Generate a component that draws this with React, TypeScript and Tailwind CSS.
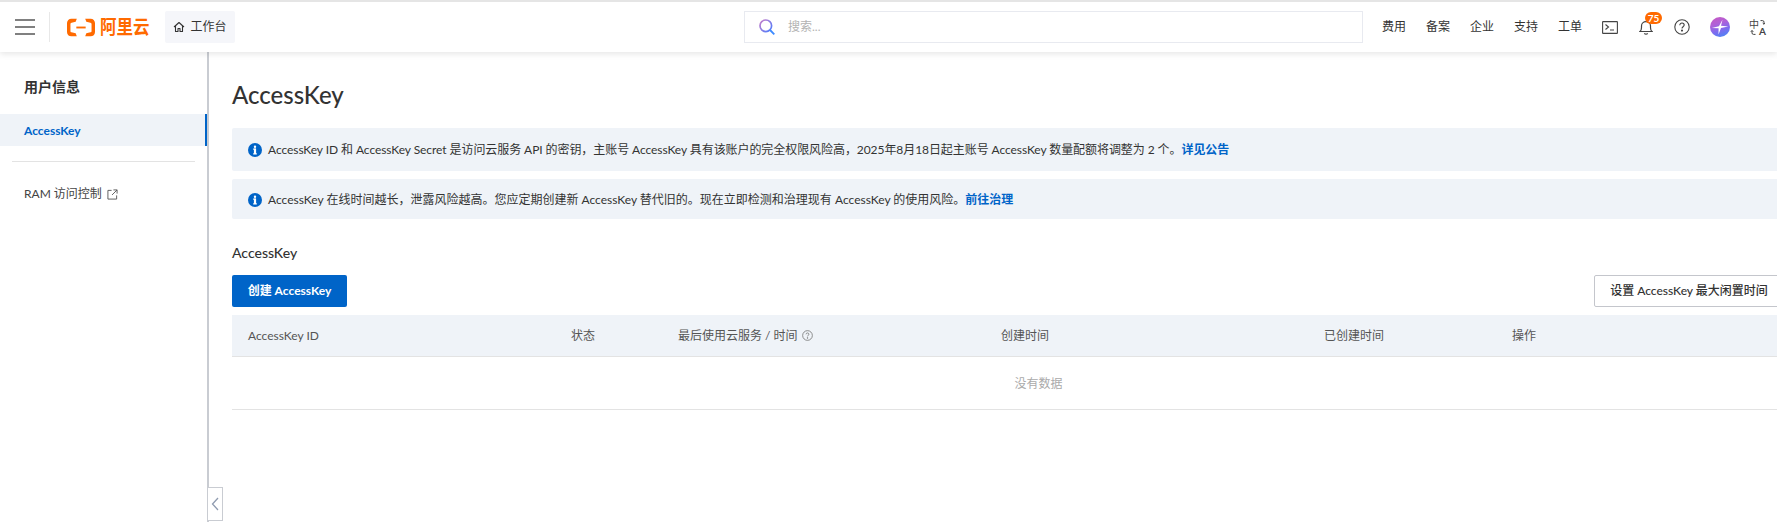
import React from "react";

function InfoIcon() {
  return (
    <svg width="14" height="14" viewBox="0 0 14 14" className="shrink-0">
      <circle cx="7" cy="7" r="7" fill="#0064c8" />
      <circle cx="7" cy="3.700" r="1.200" fill="#fff" />
      <rect x="5.900" y="5.600" width="2.200" height="5.600" fill="#fff" />
      <rect x="5" y="5.600" width="3" height="1" fill="#fff" />
      <rect x="5" y="10.400" width="4" height="1" fill="#fff" />
    </svg>
  );
}

function Logo() {
  return (
    <div className="flex items-center gap-[5px]">
      <svg width="28" height="19" viewBox="0 0 30 19" fill="#ff6a00" className="shrink-0">
        <path d="M10.500 0H4.700C2 0 0 2 0 4.700v9.600C0 17 2 19 4.700 19h5.800l-1.200-3.300-4.400-1c-.9-.2-1.200-.7-1.200-1.500V5.800c0-.8.300-1.300 1.200-1.500l4.400-1z" />
        <path d="M19.500 0h5.800C28 0 30 2 30 4.700v9.600c0 2.700-2 4.700-4.700 4.700h-5.800l1.200-3.300 4.400-1c.9-.2 1.200-.7 1.200-1.500V5.800c0-.8-.3-1.300-1.200-1.500l-4.400-1z" />
        <rect x="10" y="8.500" width="10" height="2" />
      </svg>
      <span className="text-[16.500px] leading-none font-bold text-[#ff6a00] scale-y-[1.150] whitespace-nowrap">阿里云</span>
    </div>
  );
}

function NavText({ children }: { children: React.ReactNode }) {
  return <span className="text-xs text-[#333] w-6 mr-5 whitespace-nowrap">{children}</span>;
}

const rowCols = "grid grid-cols-[323px_107px_323px_323px_188px_1fr]";

export default function App() {
  return (
    <div className="h-[522px] w-[1777px] overflow-hidden bg-white text-[#333] font-['Lato','Noto_Sans_CJK_SC',sans-serif] relative flex flex-col">
      <header className="relative z-10 h-[52px] shrink-0 border-t-2 border-[#e5e5e5] bg-white shadow-[0_2px_6px_rgba(0,0,0,0.10)] flex items-center">
        <button className="ml-[15px] w-5 h-[16px] flex flex-col justify-between shrink-0">
          <span className="block h-[2px] w-5 bg-[#808080]" />
          <span className="block h-[2px] w-5 bg-[#808080]" />
          <span className="block h-[2px] w-5 bg-[#808080]" />
        </button>
        <div className="ml-[14px] h-[30px] w-px bg-[#e8e8e8] shrink-0" />
        <div className="ml-[17px] w-[98px] shrink-0"><Logo /></div>
        <div className="h-8 w-[70px] rounded-[2px] bg-[#f5f6fa] flex items-center justify-center gap-[5px] text-xs shrink-0">
          <svg width="12" height="12" viewBox="0 0 24 24" fill="none" stroke="#333" strokeWidth="2.200" strokeLinejoin="round">
            <path d="M2 12 12 3l10 9" />
            <path d="M5 10v11h5v-6h4v6h5V10" />
          </svg>
          <span>工作台</span>
        </div>
        <div className="ml-[509px] h-8 w-[619px] border border-[#e8eaf0] flex items-center pl-[14px] shrink-0">
          <svg width="16" height="16" viewBox="0 0 16 16" fill="none" className="shrink-0">
            <defs>
              <linearGradient id="sg" x1="0" y1="0" x2="1" y2="1">
                <stop offset="0" stopColor="#c77dc8" />
                <stop offset="1" stopColor="#4a7dff" />
              </linearGradient>
            </defs>
            <circle cx="6.800" cy="6.800" r="5.800" stroke="url(#sg)" strokeWidth="1.700" />
            <path d="M11 11 15.300 15.300" stroke="#3d8bff" strokeWidth="1.800" />
          </svg>
          <span className="ml-[13px] text-xs text-[#b3b3b3]">搜索...</span>
        </div>
        <div className="ml-[19px] flex items-center shrink-0">
          <NavText>费用</NavText>
          <NavText>备案</NavText>
          <NavText>企业</NavText>
          <NavText>支持</NavText>
          <NavText>工单</NavText>
          <svg width="16" height="13" viewBox="0 0 16 13" fill="none" stroke="#444" strokeWidth="1.100" className="shrink-0">
            <rect x="0.600" y="0.600" width="14.800" height="11.800" rx="0.500" />
            <path d="M3.500 3.500 6.500 6 3.500 8.500M8 9h4" />
          </svg>
          <div className="relative ml-[21px] w-[14px] h-[16px] shrink-0">
            <svg width="14" height="16" viewBox="0 0 14 16" fill="none" stroke="#444" strokeWidth="1.200">
              <path d="M1 12.500c1.200-1 1.500-2 1.500-4V7C2.500 4.500 4.500 2.700 7 2.700S11.500 4.500 11.500 7v1.500c0 2 .3 3 1.500 4z" />
              <path d="M5.300 14.300c.8 1 2.600 1 3.400 0" />
            </svg>
            <span className="absolute -top-[7px] left-[6px] h-[12px] w-[17px] rounded-[6px] bg-[#ff6a00] text-white text-[10px] leading-[12px] font-bold text-center">75</span>
          </div>
          <svg width="16" height="16" viewBox="0 0 16 16" fill="none" stroke="#444" strokeWidth="1.100" className="ml-[21px] shrink-0">
            <circle cx="8" cy="8" r="7.200" />
            <path d="M5.800 6.200c0-1.300 1-2.200 2.200-2.200s2.200.9 2.200 2.100c0 1.700-2.200 1.700-2.200 3.400" />
            <circle cx="8" cy="11.600" r="0.500" fill="#444" />
          </svg>
          <div className="ml-[20px] h-5 w-5 rounded-full bg-[linear-gradient(160deg,#c958c0_0%,#b060d8_35%,#7a6cf0_65%,#3f8cf5_100%)] shrink-0">
            <svg width="20" height="20" viewBox="0 0 20 20" fill="#fff">
              <path d="M12.500 2.800 11 8.800 18.200 9.400 11 11 8.500 17.500 8.600 11.300 1.800 11 8.900 9.200z" />
            </svg>
          </div>
          <div className="relative ml-[20px] h-[15px] w-[15px] shrink-0 text-[#444]">
            <span className="absolute -left-px -top-[1px] text-[10px] leading-[10px]">中</span>
            <span className="absolute -right-px -bottom-[1px] text-[10px] leading-[10px] font-bold">A</span>
            <svg width="15" height="15" viewBox="0 0 15 15" fill="none" stroke="#444" strokeWidth="1" className="absolute inset-0">
              <path d="M10.500 .6h2a1.500 1.500 0 0 1 1.500 1.500v2M12.700 3l1.300 1.300L15 3M5.500 14.400h-2A1.500 1.500 0 0 1 2 12.900v-2.400M.8 11.800 2 10.500l1.300 1.300" />
            </svg>
          </div>
        </div>
      </header>

      <div className="flex flex-1 min-h-0">
        <aside className="w-[209px] shrink-0 border-r-2 border-[#c9ccd2] pt-[24px]">
          <h2 className="pl-6 text-sm leading-[22px] font-bold text-[#333]">用户信息</h2>
          <div className="mt-[16px] h-8 pl-6 pt-px flex items-center bg-[#eff3f8] border-r-2 border-[#0064c8] text-xs font-bold text-[#0064c8]">AccessKey</div>
          <div className="mx-3 mt-[15px] h-px bg-[#e3e3e3]" />
          <div className="mt-[24px] pl-6 flex items-center gap-[5px] text-xs leading-4 text-[#444]">
            <span>RAM 访问控制</span>
            <svg width="11" height="11" viewBox="0 0 12 12" fill="none" stroke="#555" strokeWidth="1">
              <path d="M5 1.500H1v9.500h9.500V7M7 1h4v4M11 1 5.500 6.500" />
            </svg>
          </div>
        </aside>

        <main className="flex-1 min-w-0 pl-[23px] overflow-hidden">
          <div className="w-[1613px]">
            <h1 className="mt-[27px] text-2xl leading-8 font-medium text-[#333]">AccessKey</h1>
            <div className="mt-[17px] h-[43px] rounded-[2px] bg-[#eff3f8] pl-4 flex items-center gap-[6px] text-xs text-[#333]">
              <InfoIcon />
              <span className="tracking-[-0.07px]">
                AccessKey ID 和 AccessKey Secret 是访问云服务 API 的密钥，主账号 AccessKey 具有该账户的完全权限风险高，2025年8月18日起主账号 AccessKey 数量配额将调整为 2 个。
                <a className="font-bold text-[#0064c8]">详见公告</a>
              </span>
            </div>
            <div className="mt-2 h-[40px] rounded-[2px] bg-[#eff3f8] pl-4 pt-px flex items-center gap-[6px] text-xs text-[#333]">
              <InfoIcon />
              <span>
                AccessKey 在线时间越长，泄露风险越高。您应定期创建新 AccessKey 替代旧的。现在立即检测和治理现有 AccessKey 的使用风险。
                <a className="font-bold text-[#0064c8]">前往治理</a>
              </span>
            </div>
            <h3 className="mt-[24px] text-sm leading-5 font-medium text-[#333]">AccessKey</h3>
            <div className="mt-[12px] w-[1552px] flex justify-between">
              <button className="h-8 w-[115px] rounded-[2px] bg-[#0064c8] text-white text-xs font-bold">创建 AccessKey</button>
              <button className="h-8 w-[190px] rounded-[2px] border border-[#c4c6cc] bg-white text-[#333] text-xs font-medium">设置 AccessKey 最大闲置时间</button>
            </div>
            <div className={`mt-2 h-[42px] bg-[#eff3f8] border-b border-[#e3e3e3] items-center pl-4 text-xs text-[#555] ${rowCols}`}>
              <span>AccessKey ID</span>
              <span>状态</span>
              <span className="flex items-center gap-[4px]">
                最后使用云服务 / 时间
                <svg width="11" height="11" viewBox="0 0 12 12" fill="none" stroke="#777" strokeWidth="0.900">
                  <circle cx="6" cy="6" r="5.300" />
                  <path d="M4.400 4.700C4.400 3.800 5.100 3.200 6 3.200s1.600.6 1.600 1.400c0 1.200-1.600 1.200-1.600 2.400" />
                  <circle cx="6" cy="8.700" r="0.400" fill="#777" />
                </svg>
              </span>
              <span>创建时间</span>
              <span>已创建时间</span>
              <span>操作</span>
            </div>
            <div className="h-[53px] pt-px border-b border-[#e3e3e3] flex items-center justify-center text-xs text-[#aaa]">没有数据</div>
          </div>
        </main>
      </div>

      <button className="absolute left-[207px] bottom-[1px] h-[34px] w-[16px] border border-[#c9ccd2] bg-white flex items-center justify-center">
        <svg width="8" height="14" viewBox="0 0 8 14" fill="none" stroke="#8f9bb0" strokeWidth="1.300">
          <path d="M7 1 1.500 7 7 13" />
        </svg>
      </button>
    </div>
  );
}
